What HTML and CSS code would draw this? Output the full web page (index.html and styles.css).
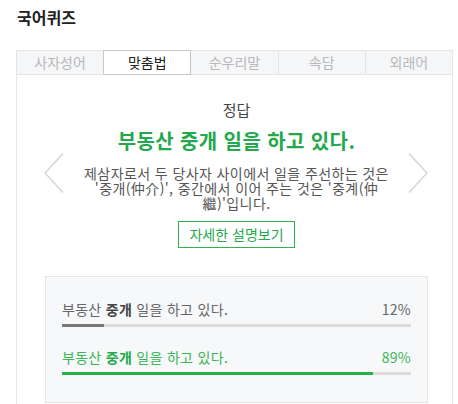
FILE: index.html
```html
<!DOCTYPE html>
<html lang="ko">
<head>
 <meta charset="UTF-8">
 <meta name="viewport" content="width=device-width, initial-scale=1.0">
 <title>국어퀴즈</title>
 <link rel="stylesheet" href="styles.css">
</head>
<body>
 <div class="quiz">
 <h2 class="quiz-title">국어퀴즈</h2>
 <ul class="tabs">
 <li class="tab">사자성어</li>
 <li class="tab active">맞춤법</li>
 <li class="tab">순우리말</li>
 <li class="tab">속담</li>
 <li class="tab">외래어</li>
 </ul>
 <div class="panel">
 <a class="nav prev" href="#">
 <svg width="20" height="40" viewBox="0 0 20 40"><polyline points="19,0.5 1,20 19,39.5" fill="none" stroke="#d6d6d6" stroke-width="1.5"/></svg>
 </a>
 <a class="nav next" href="#">
 <svg width="20" height="40" viewBox="0 0 20 40"><polyline points="1,0.5 19,20 1,39.5" fill="none" stroke="#d6d6d6" stroke-width="1.5"/></svg>
 </a>
 <p class="answer-label">정답</p>
 <p class="answer">부동산 중개 일을 하고 있다.</p>
 <p class="desc">제삼자로서 두 당사자 사이에서 일을 주선하는 것은 '중개(仲介)', 중간에서 이어 주는 것은 '중계(仲繼)'입니다.</p>
 <a class="more" href="#">자세한 설명보기</a>
 <div class="stats">
 <div class="stat">
 <div class="stat-head">
 <span>부동산 <b>중개</b> 일을 하고 있다.</span>
 <span class="pct">12%</span>
 </div>
 <div class="bar"><div class="fill" style="width: 12%"></div></div>
 </div>
 <div class="stat correct">
 <div class="stat-head">
 <span>부동산 <b>중개</b> 일을 하고 있다.</span>
 <span class="pct">89%</span>
 </div>
 <div class="bar"><div class="fill" style="width: 89%"></div></div>
 </div>
 </div>
 </div>
 </div>
</body>
</html>
```

FILE: styles.css
```css
body {
margin: 0;
background-color: #fff;
font-family: "Noto Sans CJK KR", "Liberation Sans", sans-serif;
color: #444;
}
.quiz {
width: 437px;
padding-left: 16px;
}
.quiz-title {
margin: 7px 0 23px 1px;
font-size: 16px;
line-height: 20px;
font-weight: bold;
color: #222;
}
.tabs {
display: flex;
margin: 0;
padding: 0;
list-style: none;
}
.tab {
flex: 1;
height: 23px;
margin-left: -1px;
border: 1px solid #e3e4e6;
background-color: #f5f6f8;
color: #b8b8b8;
font-size: 14px;
line-height: 23px;
text-align: center;
}
.tab:first-child {
margin-left: 0;
}
.tab.active {
position: relative;
z-index: 1;
border-color: #c8c8c8;
background-color: #fff;
color: #222;
}
.panel {
position: relative;
padding: 26px 24px 40px 28px;
border: 1px solid #e6e6e6;
border-top: none;
text-align: center;
}
.nav {
position: absolute;
top: 78px;
display: block;
width: 20px;
height: 40px;
}
.nav svg {
display: block;
}
.prev {
left: 27px;
}
.next {
right: 24px;
}
.answer-label {
margin: 0;
font-size: 15px;
line-height: 18px;
color: #444;
}
.answer {
margin: 10px 0 0;
font-size: 20px;
line-height: 24px;
letter-spacing: 0.4px;
font-weight: bold;
color: #23a84b;
}
.desc {
width: 306px;
margin: 13px auto 0;
font-size: 14px;
line-height: 15px;
letter-spacing: 0.4px;
color: #555;
}
.more {
display: inline-block;
margin-top: 10px;
padding: 0 10px;
border: 1px solid #2fb350;
font-size: 14px;
line-height: 25px;
color: #23a84b;
text-decoration: none;
}
.stats {
margin-top: 28px;
padding: 23px 16px 27px;
border: 1px solid #e6e6e6;
background-color: #f7f8fa;
text-align: left;
}
.stat + .stat {
margin-top: 21px;
}
.stat-head {
display: flex;
justify-content: space-between;
font-size: 14px;
line-height: 18px;
letter-spacing: 0.3px;
color: #666;
}
.stat-head b {
color: #444;
}
.bar {
height: 3px;
margin-top: 6px;
background-color: #dcdcdc;
}
.fill {
height: 3px;
background-color: #777;
}
.correct .stat-head {
color: #3ab556;
}
.correct .stat-head b {
color: #23a84b;
}
.correct .fill {
background-color: #27b14b;
}
```
